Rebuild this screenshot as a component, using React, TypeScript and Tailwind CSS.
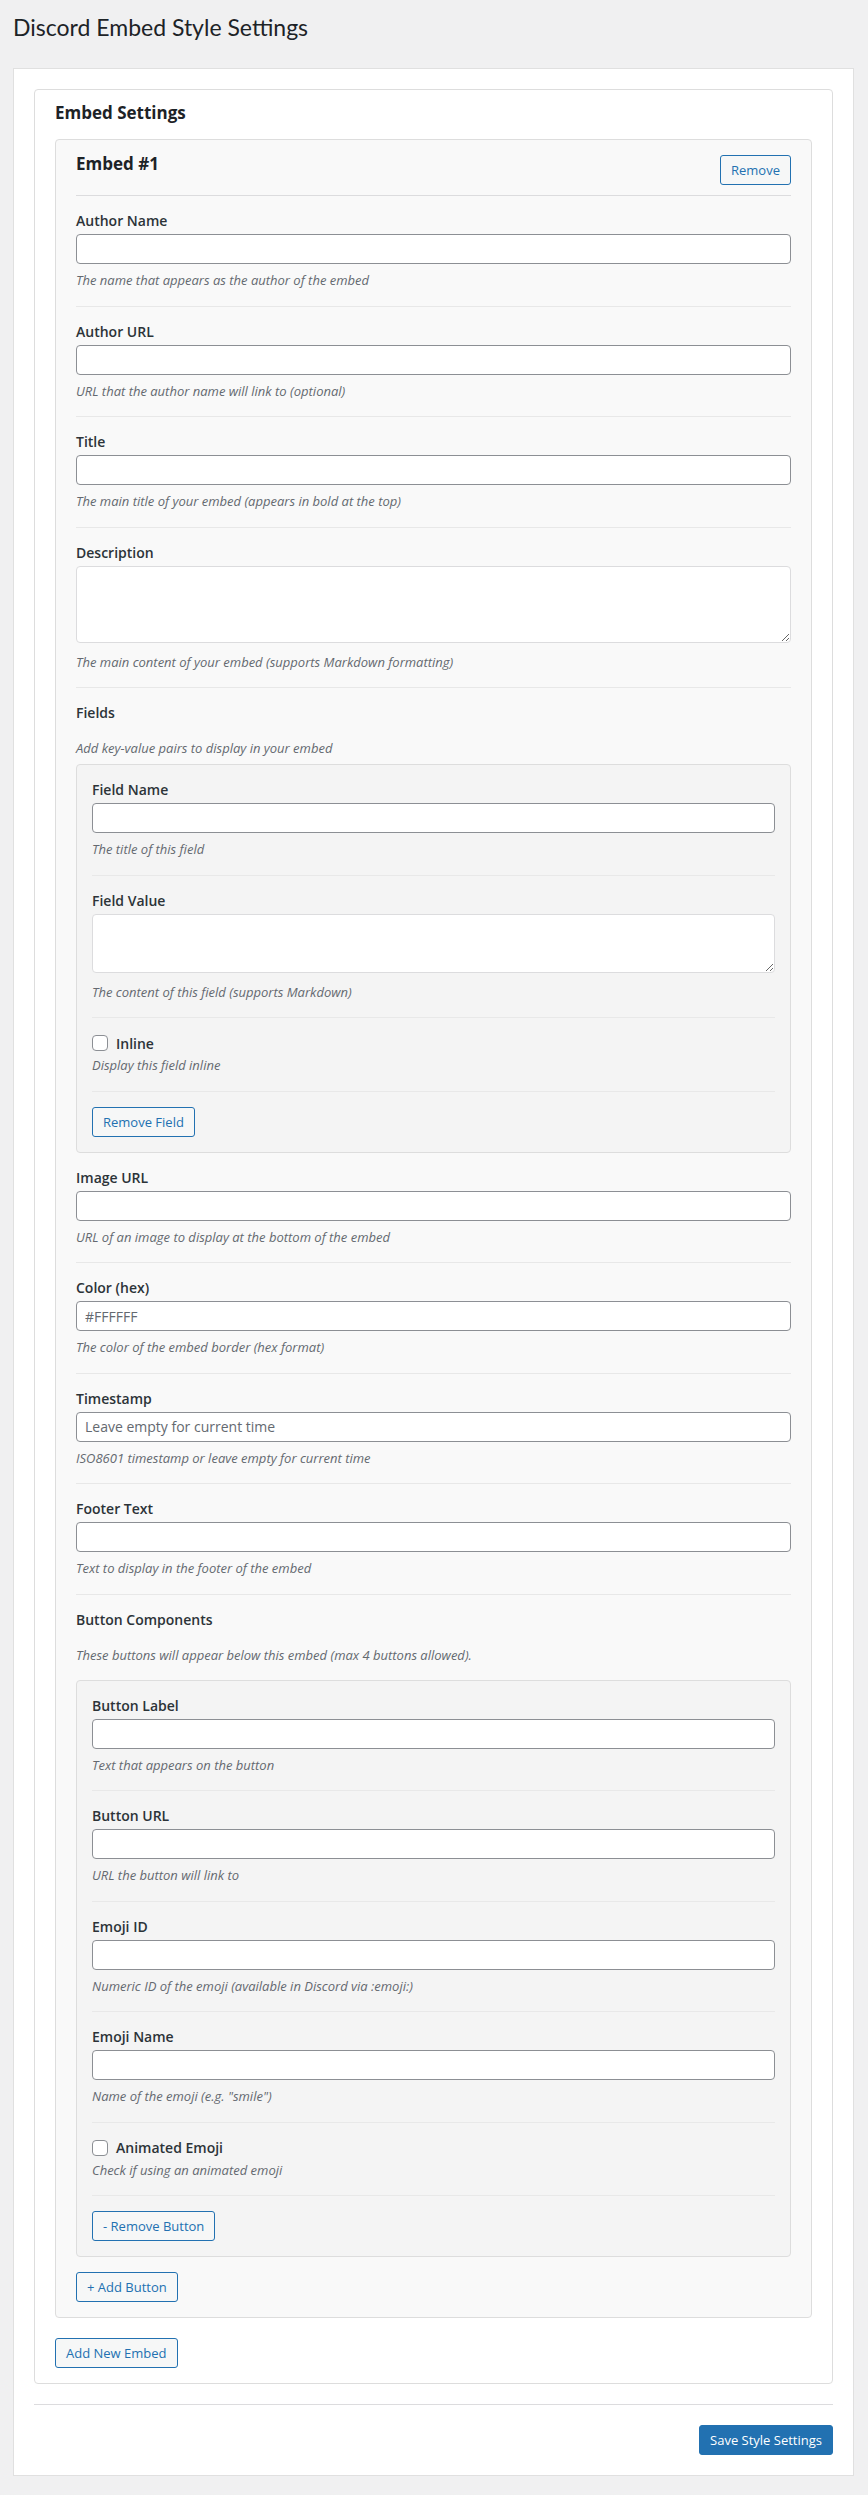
import React from "react";

type Field = {
  label: string;
  help: string;
  kind?: "input" | "textarea" | "check";
  placeholder?: string;
  rows?: number;
};

const topFields: Field[] = [
  { label: "Author Name", help: "The name that appears as the author of the embed" },
  { label: "Author URL", help: "URL that the author name will link to (optional)" },
  { label: "Title", help: "The main title of your embed (appears in bold at the top)" },
  {
    label: "Description",
    help: "The main content of your embed (supports Markdown formatting)",
    kind: "textarea",
    rows: 77,
  },
];

const embedFields: Field[] = [
  { label: "Field Name", help: "The title of this field" },
  { label: "Field Value", help: "The content of this field (supports Markdown)", kind: "textarea", rows: 59 },
  { label: "Inline", help: "Display this field inline", kind: "check" },
];

const midFields: Field[] = [
  { label: "Image URL", help: "URL of an image to display at the bottom of the embed" },
  { label: "Color (hex)", help: "The color of the embed border (hex format)", placeholder: "#FFFFFF" },
  {
    label: "Timestamp",
    help: "ISO8601 timestamp or leave empty for current time",
    placeholder: "Leave empty for current time",
  },
  { label: "Footer Text", help: "Text to display in the footer of the embed" },
];

const buttonFields: Field[] = [
  { label: "Button Label", help: "Text that appears on the button" },
  { label: "Button URL", help: "URL the button will link to" },
  { label: "Emoji ID", help: "Numeric ID of the emoji (available in Discord via :emoji:)" },
  { label: "Emoji Name", help: 'Name of the emoji (e.g. "smile")' },
  { label: "Animated Emoji", help: "Check if using an animated emoji", kind: "check" },
];

function OutlineButton({ children }: { children: React.ReactNode }) {
  return (
    <button className="h-[30px] rounded-[3px] border border-[#2271b1] bg-[#f6f7f7] px-[10px] text-[13px] leading-[28px] text-[#2271b1]">
      {children}
    </button>
  );
}

function Help({ text, mt }: { text: string; mt: string }) {
  return <p className={`${mt} text-[13px] italic leading-[20px] text-[#646970]`}>{text}</p>;
}

function FormRow({ field }: { field: Field }) {
  if (field.kind === "check") {
    return (
      <div className="mb-[15px] border-b border-[#e8e8e8] pb-[15.5px]">
        <label className="flex h-[20px] items-center gap-[8px] text-[14px] font-semibold text-[#2c3338]">
          <input
            type="checkbox"
            className="h-[16px] w-[16px] appearance-none rounded-[4px] border border-[#8c8f94] bg-white"
          />
          {field.label}
        </label>
        <Help text={field.help} mt="mt-[2px]" />
      </div>
    );
  }
  return (
    <div className="mb-[15px] border-b border-[#e8e8e8] pb-[15.5px]">
      <label className="mb-[3px] block text-[14px] font-semibold leading-[20px] text-[#2c3338]">
        {field.label}
      </label>
      {field.kind === "textarea" ? (
        <textarea
          style={{ height: field.rows }}
          className="block w-full rounded-[4px] border border-[#dcdcde] bg-white px-[8px] py-[4px] text-[14px]"
        />
      ) : (
        <input
          type="text"
          placeholder={field.placeholder}
          className="block h-[30px] w-full rounded-[4px] border border-[#8c8f94] bg-white px-[8px] text-[14px] text-[#2c3338] placeholder:text-[#646970]"
        />
      )}
      <Help text={field.help} mt={field.kind === "textarea" ? "mt-[9px]" : "mt-[6px]"} />
    </div>
  );
}

export default function App() {
  return (
    <div className="min-h-[2495px] bg-[#f0f0f1] pl-[13px] pr-[14px] pb-[20px] font-['Open_Sans',sans-serif] text-[#1d2327]">
      <h1 className="pt-[12px] font-['Lato',sans-serif] text-[23px] font-normal leading-[30px]">
        Discord Embed Style Settings
      </h1>

      <div className="mt-[26px] border border-[#e0e0e0] bg-white p-[20px]">
        <div className="rounded-[4px] border border-[#dddddd] px-[20px] pt-[12px] pb-[15px]">
          <h2 className="mb-[15px] text-[17px] font-bold leading-[22px]">Embed Settings</h2>

          <div className="rounded-[4px] border border-[#dddddd] bg-[#f9f9f9] px-[20px] pt-[15px] pb-[15px]">
            <div className="mb-[15px] flex items-start justify-between border-b border-[#dcdcde] pb-[10px]">
              <h3 className="text-[17px] font-bold leading-[18px]">Embed #1</h3>
              <OutlineButton>Remove</OutlineButton>
            </div>

            {topFields.map((f) => (
              <FormRow key={f.label} field={f} />
            ))}

            <div>
              <div className="text-[14px] font-semibold leading-[20px] text-[#2c3338]">Fields</div>
              <p className="mt-[15px] mb-[6px] text-[13px] italic leading-[20px] text-[#646970]">
                Add key-value pairs to display in your embed
              </p>
              <div className="mb-[15px] rounded-[4px] border border-[#dddddd] bg-[#f4f4f4] p-[15px]">
                {embedFields.map((f) => (
                  <FormRow key={f.label} field={f} />
                ))}
                <OutlineButton>Remove Field</OutlineButton>
              </div>
            </div>

            {midFields.map((f) => (
              <FormRow key={f.label} field={f} />
            ))}

            <div>
              <div className="text-[14px] font-semibold leading-[20px] text-[#2c3338]">Button Components</div>
              <p className="mt-[15px] mb-[15px] text-[13px] italic leading-[20px] text-[#646970]">
                These buttons will appear below this embed (max 4 buttons allowed).
              </p>
              <div className="mb-[15px] rounded-[4px] border border-[#dddddd] bg-[#f4f4f4] p-[15px]">
                {buttonFields.map((f) => (
                  <FormRow key={f.label} field={f} />
                ))}
                <OutlineButton>- Remove Button</OutlineButton>
              </div>
              <OutlineButton>+ Add Button</OutlineButton>
            </div>
          </div>

          <div className="mt-[20px]">
            <OutlineButton>Add New Embed</OutlineButton>
          </div>
        </div>

        <div className="mt-[20px] border-t border-[#dcdcde]" />

        <div className="flex justify-end pt-[20px]">
          <button className="h-[30px] rounded-[3px] border border-[#2271b1] bg-[#2271b1] px-[10px] text-[13px] leading-[28px] text-white">
            Save Style Settings
          </button>
        </div>
      </div>
    </div>
  );
}
